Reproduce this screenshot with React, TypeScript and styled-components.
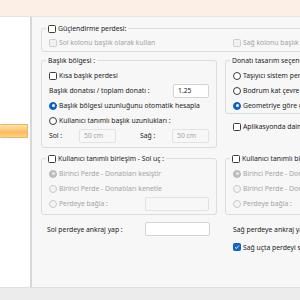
import React from 'react';
import styled, { createGlobalStyle } from 'styled-components';

const GlobalStyle = createGlobalStyle`
  html, body {
    margin: 0;
    padding: 0;
  }
  body {
    font-family: 'Noto Sans', 'Liberation Sans', sans-serif;
    font-size: 6.8px;
    color: #1b1b1b;
  }
  * {
    box-sizing: border-box;
  }
`;

const Window = styled.div`
  width: 300px;
  height: 300px;
  overflow: hidden;
  display: flex;
  flex-direction: column;
  background: #f7f7f7;
`;

const TitleBand = styled.div`
  height: 17px;
  flex: none;
  background: #fcf0e6;
  border-bottom: 1px solid #e4e4e4;
`;

const Body = styled.div`
  flex: 1;
  display: flex;
  min-height: 0;
`;

const Sidebar = styled.div`
  width: 32px;
  flex: none;
  background: #ffffff;
  border-right: 2px solid #d8d8d8;
  padding-top: 107px;
`;

const Highlight = styled.div`
  width: 28px;
  height: 14px;
  border-radius: 1px;
  background: linear-gradient(
    to bottom,
    #fde2ae 0%,
    #fbcd80 35%,
    #f8bb57 60%,
    #fbd38f 100%
  );
  border: 1px solid #efb45c;
  border-left: none;
`;

const Main = styled.div`
  flex: 1;
  min-width: 0;
  overflow: hidden;
  padding: 6px 0 0 9px;
  background: #f7f7f7;
`;

const StatusBar = styled.div`
  height: 13px;
  flex: none;
  background: #ececec;
  border-top: 1px solid #dfdfdf;
`;

const Group = styled.fieldset<{ $pt?: number; $pb?: number; $w?: number }>`
  margin: 0;
  min-width: 0;
  ${({ $w }) => ($w ? `width: ${$w}px;` : '')}
  border: 1px solid #dcdcdc;
  border-radius: 3px;
  padding: ${({ $pt = 2 }) => $pt}px 7px ${({ $pb = 3 }) => $pb}px 7px;
`;

const Legend = styled.legend`
  margin-left: -3px;
  padding: 0 2px;
  height: 11px;
  line-height: 11px;
  display: flex;
  align-items: center;
  white-space: nowrap;
`;

const Columns = styled.div<{ $mt: number }>`
  display: grid;
  grid-template-columns: 176px 200px;
  column-gap: 8px;
  align-items: start;
  margin-top: ${({ $mt }) => $mt}px;
`;

const Stack = styled.div<{ $gap?: number; $pl?: number; $pr?: number }>`
  display: flex;
  flex-direction: column;
  gap: ${({ $gap = 0 }) => $gap}px;
  padding-left: ${({ $pl = 0 }) => $pl}px;
  padding-right: ${({ $pr = 0 }) => $pr}px;
`;

const SplitRow = styled.div`
  display: grid;
  grid-template-columns: 184px auto;
  height: 13px;
  align-items: center;
  white-space: nowrap;
`;

const Row = styled.div<{ $h?: number }>`
  display: flex;
  align-items: center;
  height: ${({ $h = 15 }) => $h}px;
  white-space: nowrap;
`;

const Text = styled.span<{ $disabled?: boolean; $w?: number }>`
  color: ${({ $disabled }) => ($disabled ? '#a3a3a3' : '#1b1b1b')};
  ${({ $w }) => ($w ? `width: ${$w}px; flex: none;` : '')}
`;

const CheckBox = styled.span<{ $checked?: boolean; $disabled?: boolean }>`
  width: 8px;
  height: 8px;
  flex: none;
  margin-right: 2px;
  border-radius: 1.5px;
  display: flex;
  align-items: center;
  justify-content: center;
  border: 1px solid
    ${({ $checked, $disabled }) =>
      $checked ? '#0f5fb8' : $disabled ? '#cdcdcd' : '#3c3c3c'};
  background: ${({ $checked, $disabled }) =>
    $checked ? '#1367c4' : $disabled ? '#f1f1f1' : '#ffffff'};
`;

const RadioDot = styled.span<{ $checked?: boolean; $disabled?: boolean }>`
  width: 8px;
  height: 8px;
  flex: none;
  margin-right: 2px;
  border-radius: 50%;
  display: flex;
  align-items: center;
  justify-content: center;
  border: 1px solid
    ${({ $checked, $disabled }) =>
      $checked ? ($disabled ? '#b9b9b9' : '#0a5fc0') : $disabled ? '#c9c9c9' : '#3c3c3c'};
  background: ${({ $checked, $disabled }) =>
    $checked ? ($disabled ? '#bdbdbd' : '#0a64c8') : $disabled ? '#f3f3f3' : '#ffffff'};

  &::after {
    content: '';
    display: ${({ $checked }) => ($checked ? 'block' : 'none')};
    width: 3px;
    height: 3px;
    border-radius: 50%;
    background: ${({ $disabled }) => ($disabled ? '#e9e9e9' : '#ffffff')};
  }
`;

const Field = styled.div<{ $w: number; $disabled?: boolean; $auto?: boolean }>`
  width: ${({ $w }) => $w}px;
  height: 14px;
  flex: none;
  ${({ $auto }) => ($auto ? 'margin-left: auto;' : '')}
  padding-left: 4px;
  display: flex;
  align-items: center;
  border: 1px solid ${({ $disabled }) => ($disabled ? '#e2e2e2' : '#d4d4d4')};
  border-radius: 2px;
  background: ${({ $disabled }) => ($disabled ? '#f7f7f7' : '#ffffff')};
  color: ${({ $disabled }) => ($disabled ? '#a3a3a3' : '#1b1b1b')};
`;

const Spacer = styled.span`
  flex: 1;
`;

type OptionProps = {
  label: string;
  checked?: boolean;
  disabled?: boolean;
};

const Check: React.FC<OptionProps> = ({ label, checked, disabled }) => (
  <>
    <CheckBox $checked={checked} $disabled={disabled}>
      {checked && (
        <svg width="6" height="6" viewBox="0 0 6 6">
          <polyline points="1,3.2 2.4,4.5 5,1.5" fill="none" stroke="#fff" strokeWidth="0.9" />
        </svg>
      )}
    </CheckBox>
    <Text $disabled={disabled}>{label}</Text>
  </>
);

const Radio: React.FC<OptionProps> = ({ label, checked, disabled }) => (
  <>
    <RadioDot $checked={checked} $disabled={disabled} />
    <Text $disabled={disabled}>{label}</Text>
  </>
);

const JointGroup: React.FC<{ side: string; withField?: boolean }> = ({ side, withField }) => (
  <Group $pt={2} $pb={3}>
    <Legend>
      <Check label={`Kullanıcı tanımlı birleşim - ${side} uç :`} />
    </Legend>
    <Row>
      <Radio label="Birinci Perde - Donatıları kesiştir" checked disabled />
    </Row>
    <Row>
      <Radio label="Birinci Perde - Donatıları kenetle" disabled />
    </Row>
    <Row>
      <Radio label="Perdeye bağla :" disabled />
      {withField && <Field $w={64} $disabled $auto />}
    </Row>
  </Group>
);

export default function App() {
  return (
    <>
      <GlobalStyle />
      <Window>
        <TitleBand />
        <Body>
          <Sidebar>
            <Highlight />
          </Sidebar>
          <Main>
            {/* Güçlendirme perdesi */}
            <Group $w={384} $pt={2} $pb={2}>
              <Legend>
                <Check label="Güçlendirme perdesi:" />
              </Legend>
              <SplitRow>
                <Row $h={13}>
                  <Check label="Sol kolonu başlık olarak kullan" disabled />
                </Row>
                <Row $h={13}>
                  <Check label="Sağ kolonu başlık olarak kullan" disabled />
                </Row>
              </SplitRow>
            </Group>

            {/* Başlık bölgesi / Donatı tasarım seçenekleri */}
            <Columns $mt={3}>
              <Group $pt={2} $pb={4}>
                <Legend>Başlık bölgesi :</Legend>
                <Row>
                  <Check label="Kısa başlık perdesi" />
                </Row>
                <Row>
                  <Text>Başlık donatısı / toplam donatı :</Text>
                  <Field $w={36} $auto>1.25</Field>
                </Row>
                <Row>
                  <Radio label="Başlık bölgesi uzunluğunu otomatik hesapla" checked />
                </Row>
                <Row>
                  <Radio label="Kullanıcı tanımlı başlık uzunlukları :" />
                </Row>
                <Row>
                  <Text $w={30}>Sol :</Text>
                  <Field $w={37} $disabled>50 cm</Field>
                  <Spacer />
                  <Text $w={32}>Sağ :</Text>
                  <Field $w={37} $disabled>50 cm</Field>
                </Row>
              </Group>
              <Stack $gap={6}>
                <Group $pt={2} $pb={0}>
                  <Legend>Donatı tasarım seçenekleri</Legend>
                  <Row>
                    <Radio label="Taşıyıcı sistem perdelerinin donatısı" />
                  </Row>
                  <Row>
                    <Radio label="Bodrum kat çevre perdeleri" />
                  </Row>
                  <Row>
                    <Radio label="Geometriye göre otomatik seç" checked />
                  </Row>
                </Group>
                <Stack $pl={8}>
                  <Row $h={13}>
                    <Check label="Aplikasyonda daima göster" />
                  </Row>
                </Stack>
              </Stack>
            </Columns>

            {/* Birleşim grupları */}
            <Columns $mt={5}>
              <JointGroup side="Sol" withField />
              <JointGroup side="Sağ" />
            </Columns>

            {/* Ankraj */}
            <Columns $mt={7}>
              <Stack $pl={6} $pr={7}>
                <Row $h={14}>
                  <Text>Sol perdeye ankraj yap :</Text>
                  <Field $w={65} $auto />
                </Row>
              </Stack>
              <Stack $pl={8} $gap={4}>
                <Row $h={14}>
                  <Text>Sağ perdeye ankraj yap :</Text>
                </Row>
                <Row $h={14}>
                  <Check label="Sağ uçta perdeyi sonlandır" checked />
                </Row>
              </Stack>
            </Columns>
          </Main>
        </Body>
        <StatusBar />
      </Window>
    </>
  );
}
